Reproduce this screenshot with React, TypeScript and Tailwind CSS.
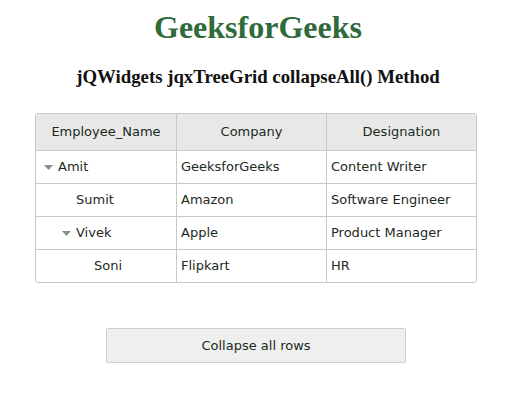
import React from 'react';

const rows = [
  { name: 'Amit', indent: 'pl-[8px]', caret: true, company: 'GeeksforGeeks', role: 'Content Writer' },
  { name: 'Sumit', indent: 'pl-[40px]', caret: false, company: 'Amazon', role: 'Software Engineer' },
  { name: 'Vivek', indent: 'pl-[26px]', caret: true, company: 'Apple', role: 'Product Manager' },
  { name: 'Soni', indent: 'pl-[58px]', caret: false, company: 'Flipkart', role: 'HR' },
];

function Caret() {
  return (
    <svg width="9" height="5" viewBox="0 0 9 5" className="mr-[5px] shrink-0">
      <path d="M0 0 L9 0 L4.5 5 Z" fill="#8a8f8a" />
    </svg>
  );
}

export default function App() {
  return (
    <div className="w-[516px] h-[412px] bg-white text-center">
      <h1 className="pt-[8px] text-[32px] leading-[38px] font-bold text-[#2f6b3a] font-['Liberation_Serif',serif]">
        GeeksforGeeks
      </h1>
      <h3 className="mt-[20px] text-[18.8px] leading-[22px] font-bold text-[#111] font-['Liberation_Serif',serif]">
        jQWidgets jqxTreeGrid collapseAll() Method
      </h3>

      <div className="mt-[25px] ml-[35px] w-[442px] border border-[#c8c8c8] rounded-[3px] overflow-hidden text-left font-['DejaVu_Sans',sans-serif] text-[13px] text-[#1b2a1b]">
        <div className="grid grid-cols-[141px_150px_1fr] h-[37px] bg-[#e8e8e8] border-b border-[#c8c8c8]">
          <div className="flex items-center justify-center border-r border-[#c8c8c8]">Employee_Name</div>
          <div className="flex items-center justify-center border-r border-[#c8c8c8]">Company</div>
          <div className="flex items-center justify-center">Designation</div>
        </div>
        {rows.map((r, i) => (
          <div
            key={r.name}
            className={`grid grid-cols-[141px_150px_1fr] ${i < rows.length - 1 ? 'h-[33px] border-b border-[#c8c8c8]' : 'h-[32px]'}`}
          >
            <div className={`flex items-center border-r border-[#c8c8c8] ${r.indent}`}>
              {r.caret && <Caret />}
              {r.name}
            </div>
            <div className="flex items-center px-[4px] border-r border-[#c8c8c8]">{r.company}</div>
            <div className="flex items-center px-[4px]">{r.role}</div>
          </div>
        ))}
      </div>

      <div className="mt-[45px] ml-[106px] w-[300px] h-[35px] flex items-center justify-center bg-[#efefef] border border-[#cfcfcf] rounded-[2px] font-['DejaVu_Sans',sans-serif] text-[13px] text-[#1b2a1b]">
        Collapse all rows
      </div>
    </div>
  );
}
